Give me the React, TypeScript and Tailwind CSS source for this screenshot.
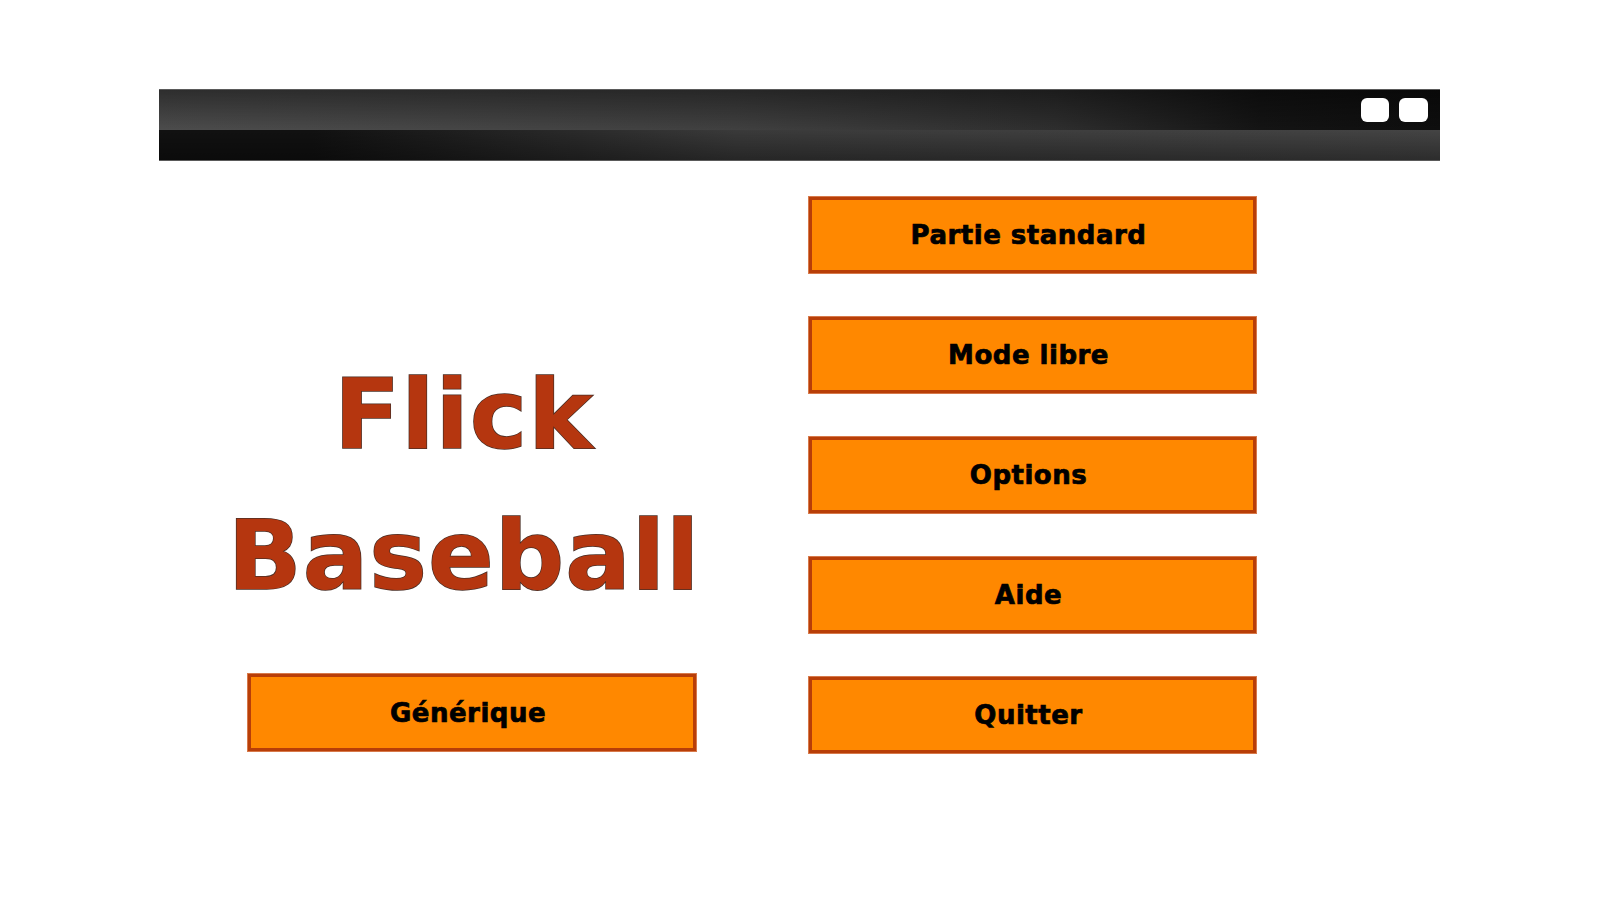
import React from "react";

function OrangeButton({ label, className = "" }: { label: string; className?: string }) {
  return (
    <div
      className={`h-[78px] w-[449px] border border-[#d7794a] bg-[#b83e08] p-[3px] ${className}`}
    >
      <div className="flex h-full w-full items-center justify-center bg-[#ff8800] pr-[8px]">
        <span className="font-['DejaVu_Sans','Liberation_Sans',sans-serif] text-[26px] font-bold leading-none tracking-[0.5px] text-black [-webkit-text-stroke:0.7px_black]">
          {label}
        </span>
      </div>
    </div>
  );
}

export default function App() {
  return (
    <div className="h-[900px] w-[1600px] overflow-hidden bg-white pt-[89px]">
      {/* Header bar */}
      <div className="relative ml-[159px] flex h-[72px] w-[1281px] flex-col border-y border-[#5a5a5a]">
        <div className="h-[40px] w-full bg-[linear-gradient(to_bottom,rgba(0,0,0,0.4),rgba(0,0,0,0)),linear-gradient(to_right,#4c4c4c,#404040_45%,#2e2e2e_70%,#141414_86%,#0e0e0e)]" />
        <div className="w-full flex-1 bg-[linear-gradient(to_bottom,rgba(0,0,0,0),rgba(0,0,0,0.35)),linear-gradient(to_right,#111111_12%,#3a3a3a_45%,#444444)]" />
        <div className="absolute right-[12px] top-[8px] flex gap-[10px]">
          <div className="h-[24px] w-[28px] rounded-[6px] bg-white" />
          <div className="h-[24px] w-[29px] rounded-[6px] bg-white" />
        </div>
      </div>

      {/* Main */}
      <div className="ml-[247px] mt-[35px] flex gap-[111px]">
        <div className="flex w-[450px] flex-col pt-[148px]">
          <div className="flex flex-col items-center pr-[16px] font-['DejaVu_Sans','Liberation_Sans',sans-serif] text-[97px] font-bold leading-[141px] tracking-[1px] text-[#b5360f] [-webkit-text-stroke:1.5px_#4a2f26] [paint-order:stroke_fill]">
            <span>Flick</span>
            <span>Baseball</span>
          </div>
          <OrangeButton label="Générique" className="mt-[47px] h-[79px] w-[450px]" />
        </div>
        <div className="flex flex-col gap-[42px]">
          <OrangeButton label="Partie standard" />
          <OrangeButton label="Mode libre" />
          <OrangeButton label="Options" />
          <OrangeButton label="Aide" />
          <OrangeButton label="Quitter" />
        </div>
      </div>
    </div>
  );
}
